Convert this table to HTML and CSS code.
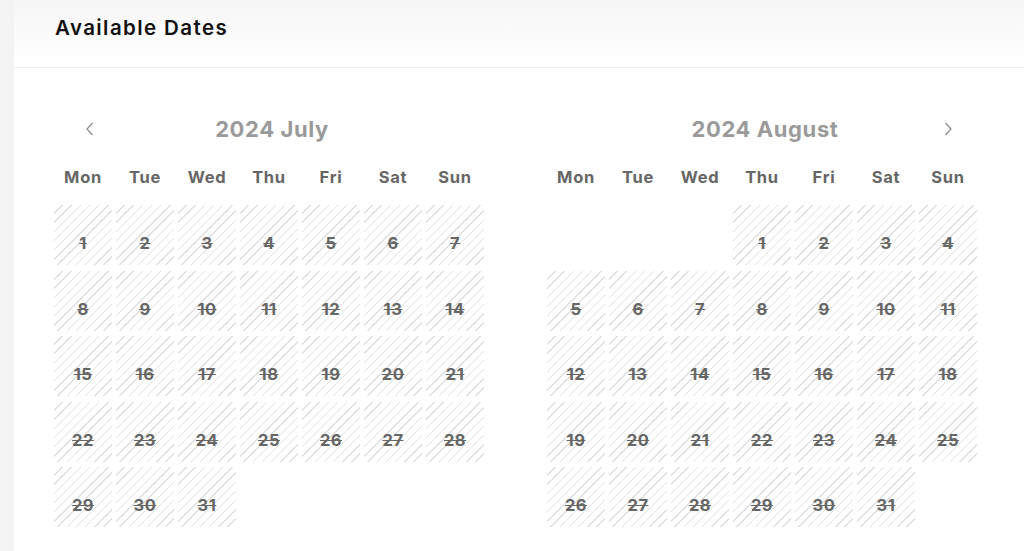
FILE: index.html
```html
<!DOCTYPE html>
<html lang="en">
<head>
<meta charset="utf-8">
<title>Available Dates</title>
<link rel="stylesheet" href="styles.css">
</head>
<body>
<div class="panel">
  <header class="panel-head">
    <h2 class="panel-title">Available Dates</h2>
  </header>
  <div class="calendars">
    <section class="month">
      <div class="month-head">
        <button class="nav nav-prev" aria-label="Previous month">
          <svg width="10" height="14" viewBox="0 0 10 14"><polyline points="7.5,1 2,7 7.5,13" fill="none" stroke="#8a8a8a" stroke-width="1.2"/></svg>
        </button>
        <div class="month-title">2024 July</div>
        <span class="nav-spacer"></span>
      </div>
      <div class="weekdays">
        <span>Mon</span><span>Tue</span><span>Wed</span><span>Thu</span><span>Fri</span><span>Sat</span><span>Sun</span>
      </div>
      <div class="days">
        <span class="day off">1</span><span class="day off">2</span><span class="day off">3</span><span class="day off">4</span><span class="day off">5</span><span class="day off">6</span><span class="day off">7</span>
        <span class="day off">8</span><span class="day off">9</span><span class="day off">10</span><span class="day off">11</span><span class="day off">12</span><span class="day off">13</span><span class="day off">14</span>
        <span class="day off">15</span><span class="day off">16</span><span class="day off">17</span><span class="day off">18</span><span class="day off">19</span><span class="day off">20</span><span class="day off">21</span>
        <span class="day off">22</span><span class="day off">23</span><span class="day off">24</span><span class="day off">25</span><span class="day off">26</span><span class="day off">27</span><span class="day off">28</span>
        <span class="day off">29</span><span class="day off">30</span><span class="day off">31</span>
      </div>
    </section>
    <section class="month">
      <div class="month-head">
        <span class="nav-spacer"></span>
        <div class="month-title">2024 August</div>
        <button class="nav nav-next" aria-label="Next month">
          <svg width="10" height="14" viewBox="0 0 10 14"><polyline points="2.5,1 8,7 2.5,13" fill="none" stroke="#8a8a8a" stroke-width="1.2"/></svg>
        </button>
      </div>
      <div class="weekdays">
        <span>Mon</span><span>Tue</span><span>Wed</span><span>Thu</span><span>Fri</span><span>Sat</span><span>Sun</span>
      </div>
      <div class="days">
        <span class="day empty"></span><span class="day empty"></span><span class="day empty"></span><span class="day off">1</span><span class="day off">2</span><span class="day off">3</span><span class="day off">4</span>
        <span class="day off">5</span><span class="day off">6</span><span class="day off">7</span><span class="day off">8</span><span class="day off">9</span><span class="day off">10</span><span class="day off">11</span>
        <span class="day off">12</span><span class="day off">13</span><span class="day off">14</span><span class="day off">15</span><span class="day off">16</span><span class="day off">17</span><span class="day off">18</span>
        <span class="day off">19</span><span class="day off">20</span><span class="day off">21</span><span class="day off">22</span><span class="day off">23</span><span class="day off">24</span><span class="day off">25</span>
        <span class="day off">26</span><span class="day off">27</span><span class="day off">28</span><span class="day off">29</span><span class="day off">30</span><span class="day off">31</span>
      </div>
    </section>
  </div>
</div>
</body>
</html>
```

FILE: styles.css
```css
* { box-sizing: border-box; }
html, body { margin: 0; padding: 0; }
body {
  background: #f3f3f3;
  font-family: "Inter", "Liberation Sans", sans-serif;
  height: 551px;
  overflow: hidden;
}
.panel {
  margin-left: 14px;
  background: #fff;
  min-height: 551px;
}
.panel-head {
  height: 68px;
  padding: 14px 41px 0;
  background: linear-gradient(#f6f6f6, #ffffff);
  border-bottom: 1px solid #ececec;
}
.panel-title {
  margin: 0;
  font-size: 20.5px;
  line-height: 28px;
  font-weight: 600;
  letter-spacing: 1.4px;
  color: #111;
}
.calendars {
  display: flex;
  gap: 61px;
  padding: 44px 0 0 40px;
}
.month { width: 432px; }
.month-head {
  display: grid;
  grid-template-columns: 1fr auto 1fr;
  align-items: center;
  height: 34px;
}
.month-title {
  font-size: 22px;
  font-weight: 700;
  letter-spacing: 0.6px;
  color: #9a9a9a;
  line-height: 34px;
  margin-left: 4px;
}
.nav {
  background: none;
  border: 0;
  padding: 0;
  width: 10px;
  height: 14px;
  display: flex;
  cursor: pointer;
}
.nav-prev { justify-self: start; margin-left: 31px; }
.nav-next { justify-self: end; margin-right: 26px; }
.weekdays {
  display: grid;
  grid-template-columns: repeat(7, 58px);
  column-gap: 4px;
  margin-top: 16px;
  height: 30px;
  line-height: 30px;
}
.weekdays span {
  text-align: center;
  font-size: 16.5px;
  font-weight: 700;
  letter-spacing: 0.7px;
  color: #666;
}
.days {
  display: grid;
  grid-template-columns: repeat(7, 58px);
  grid-auto-rows: 60px;
  column-gap: 4px;
  row-gap: 5.5px;
  margin-top: 13px;
}
.day {
  display: flex;
  align-items: center;
  justify-content: center;
  padding-top: 16px;
  font-size: 16.5px;
  font-weight: 700;
  letter-spacing: 0.5px;
  color: #666;
}
.day.off {
  text-decoration: line-through;
  background: repeating-linear-gradient(135deg, #ffffff 0, #ffffff 5.5px, #e0e0e0 5.5px, #e0e0e0 6.5px);
}
```
